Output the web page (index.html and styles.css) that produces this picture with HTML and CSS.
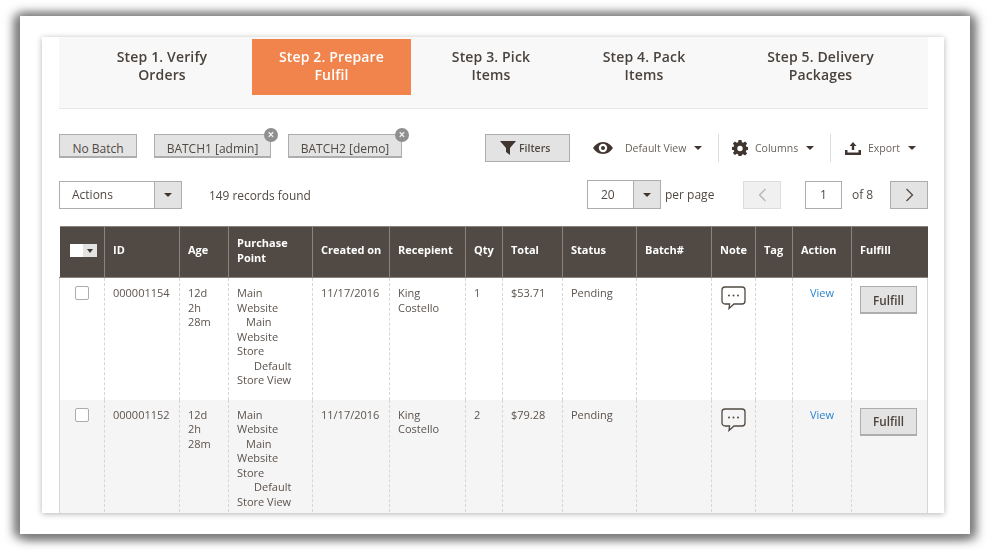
FILE: index.html
```html
<!DOCTYPE html>
<html lang="en">
<head>
    <meta charset="UTF-8">
    <title>Prepare Fulfil</title>
    <link rel="stylesheet" href="styles.css">
</head>
<body>
    <div class="frame">
        <div class="card">
            <div class="steps">
                <div class="step step-1">Step 1. Verify<br>Orders</div>
                <div class="step step-2 active">Step 2. Prepare<br>Fulfil</div>
                <div class="step step-3">Step 3. Pick<br>Items</div>
                <div class="step step-4">Step 4. Pack<br>Items</div>
                <div class="step step-5">Step 5. Delivery<br>Packages</div>
            </div>

            <div class="toolbar">
                <button class="batch batch-none">No Batch</button>
                <button class="batch batch-1">BATCH1 [admin]<span class="batch-close">×</span></button>
                <button class="batch batch-2">BATCH2 [demo]<span class="batch-close">×</span></button>
                <button class="filters">
                    <svg width="16" height="14" viewBox="0 0 16 14"><path d="M0 0h16L10 7v7L6 11V7z" fill="#41362f"/></svg>
                    Filters
                </button>
                <div class="tool tool-view">
                    <svg class="eye" width="20" height="14" viewBox="0 0 20 14"><path fill-rule="evenodd" d="M10 1c4.500 0 8 3 10 6-2 3-5.500 6-10 6S2 10 0 7c2-3 5.500-6 10-6zm0 1.800a4.200 4.200 0 1 0 0 8.400 4.200 4.200 0 0 0 0-8.400zM10 5a2 2 0 1 1 0 4 2 2 0 0 1 0-4z" fill="#41362f"/></svg>
                    <span>Default View</span><i class="caret"></i>
                </div>
                <div class="tool tool-columns">
                    <svg width="16" height="16" viewBox="0 0 16 16"><path fill-rule="evenodd" d="M6.500 0h3l.4 2.300 1.300.5L13.100 1.500l2 2-1.300 1.900.5 1.300L16 7v3l-1.700.3-.5 1.300 1.300 1.900-2 2-1.900-1.300-1.300.5L9.500 16h-3l-.4-1.700-1.300-.5-1.900 1.300-2-2 1.300-1.900-.5-1.300L0 10V7l1.700-.3.500-1.300L.9 3.500l2-2 1.900 1.300 1.300-.5zM8 5.800a2.700 2.700 0 1 0 0 5.400 2.700 2.700 0 0 0 0-5.400z" fill="#41362f"/></svg>
                    <span>Columns</span><i class="caret"></i>
                </div>
                <div class="tool tool-export">
                    <svg width="16" height="14" viewBox="0 0 16 14"><path d="M8 1l3.500 4H9.200v4H6.800V5H4.500zM0 9h2.500v2.500h11V9H16v5H0z" fill="#41362f"/></svg>
                    <span>Export</span><i class="caret"></i>
                </div>
            </div>

            <div class="pager-row">
                <div class="select select-actions"><span class="select-value">Actions</span><span class="select-arrow"><i class="caret"></i></span></div>
                <span class="records">149 records found</span>
                <div class="select select-size"><span class="select-value">20</span><span class="select-arrow"><i class="caret"></i></span></div>
                <span class="per-page">per page</span>
                <button class="page-btn page-prev"><svg width="9" height="14" viewBox="0 0 9 14"><path d="M7.500 1L1.500 7l6 6" fill="none" stroke="#b5b5b5" stroke-width="1.300"/></svg></button>
                <div class="page-input">1</div>
                <span class="page-of">of 8</span>
                <button class="page-btn page-next"><svg width="9" height="14" viewBox="0 0 9 14"><path d="M1.500 1l6 6-6 6" fill="none" stroke="#514943" stroke-width="1.300"/></svg></button>
            </div>

            <table class="grid">
                <colgroup>
                    <col class="c-check"><col class="c-id"><col class="c-age"><col class="c-point"><col class="c-created">
                    <col class="c-recipient"><col class="c-qty"><col class="c-total"><col class="c-status"><col class="c-batch">
                    <col class="c-note"><col class="c-tag"><col class="c-action"><col class="c-fulfill">
                </colgroup>
                <thead>
                    <tr>
                        <th><span class="mass-check"><span class="mass-box"></span><span class="mass-arrow"><i class="caret"></i></span></span></th>
                        <th>ID</th>
                        <th>Age</th>
                        <th>Purchase Point</th>
                        <th>Created on</th>
                        <th>Recepient</th>
                        <th>Qty</th>
                        <th>Total</th>
                        <th>Status</th>
                        <th>Batch#</th>
                        <th>Note</th>
                        <th>Tag</th>
                        <th>Action</th>
                        <th>Fulfill</th>
                    </tr>
                </thead>
                <tbody>
                    <tr>
                        <td class="cell-check"><span class="checkbox"></span></td>
                        <td>000001154</td>
                        <td>12d<br>2h<br>28m</td>
                        <td>Main<br>Website<br><span class="in-1">Main</span><br>Website<br>Store<br><span class="in-2">Default</span><br>Store View</td>
                        <td>11/17/2016</td>
                        <td>King Costello</td>
                        <td class="qty-link">1</td>
                        <td>$53.71</td>
                        <td>Pending</td>
                        <td></td>
                        <td class="cell-note">
                            <svg width="25" height="24" viewBox="0 0 25 24"><path d="M4 1h17a3 3 0 0 1 3 3v11a3 3 0 0 1-3 3h-8l-5 4.500.6-4.500H4a3 3 0 0 1-3-3V4a3 3 0 0 1 3-3z" fill="#fff" stroke="#514943" stroke-width="1.300"/><circle cx="8" cy="9.500" r="1" fill="#514943"/><circle cx="12.500" cy="9.500" r="1" fill="#514943"/><circle cx="17" cy="9.500" r="1" fill="#514943"/></svg>
                        </td>
                        <td></td>
                        <td class="cell-view"><a href="#">View</a></td>
                        <td class="cell-fulfill"><button class="fulfill">Fulfill</button></td>
                    </tr>
                    <tr class="even">
                        <td class="cell-check"><span class="checkbox"></span></td>
                        <td>000001152</td>
                        <td>12d<br>2h<br>28m</td>
                        <td>Main<br>Website<br><span class="in-1">Main</span><br>Website<br>Store<br><span class="in-2">Default</span><br>Store View</td>
                        <td>11/17/2016</td>
                        <td>King Costello</td>
                        <td>2</td>
                        <td>$79.28</td>
                        <td>Pending</td>
                        <td></td>
                        <td class="cell-note">
                            <svg width="25" height="24" viewBox="0 0 25 24"><path d="M4 1h17a3 3 0 0 1 3 3v11a3 3 0 0 1-3 3h-8l-5 4.500.6-4.500H4a3 3 0 0 1-3-3V4a3 3 0 0 1 3-3z" fill="#f5f5f5" stroke="#514943" stroke-width="1.300"/><circle cx="8" cy="9.500" r="1" fill="#514943"/><circle cx="12.500" cy="9.500" r="1" fill="#514943"/><circle cx="17" cy="9.500" r="1" fill="#514943"/></svg>
                        </td>
                        <td></td>
                        <td class="cell-view"><a href="#">View</a></td>
                        <td class="cell-fulfill"><button class="fulfill">Fulfill</button></td>
                    </tr>
                </tbody>
            </table>
        </div>
    </div>
</body>
</html>
```

FILE: styles.css
```css
* {
    box-sizing: border-box;
}

html, body {
    margin: 0;
    padding: 0;
    height: 550px;
    overflow: hidden;
    background: #fff;
}

body {
    font-family: "Open Sans", sans-serif;
    font-size: 11px;
    color: #514943;
    padding: 16px 0 0 20px;
}

button {
    font-family: inherit;
    color: inherit;
}

.frame {
    width: 950px;
    height: 518px;
    background: #fff;
    padding: 21px 26px 21px 22px;
    box-shadow: -4px 1px 10px 2px #7d7d7d, 4px 3px 10px 2px #7d7d7d, 0 -2px 10px 1px #a8a8a8;
    filter: blur(0.4px);
}

.card {
    height: 476px;
    padding: 0 16px 0 17px;
    background: #fff;
    overflow: hidden;
    box-shadow: 0 1px 6px rgba(0, 0, 0, 0.3);
}

/* steps */
.steps {
    display: grid;
    grid-template-columns: 180px 159px 160px 146px 207px;
    height: 72px;
    padding: 2px 4px 0 13px;
    background: #f8f8f8;
    border-bottom: 1px solid #e6e6e6;
}

.step {
    height: 56px;
    padding-top: 9px;
    font-size: 14px;
    line-height: 18px;
    font-weight: 600;
    letter-spacing: 0.15px;
    text-align: center;
    color: #4a423c;
}

.step.active {
    background: #f1844c;
    color: #fff;
}

/* batch buttons and view tools */
.toolbar {
    display: flex;
    align-items: flex-start;
    margin-top: 25px;
    height: 46px;
}

.batch {
    position: relative;
    height: 24px;
    padding: 5px 0 0;
    font-size: 12px;
    background: #e3e3e3;
    border: 1px solid #adadad;
    border-bottom-width: 2px;
}

.batch-none {
    width: 78px;
}

.batch-1 {
    width: 117px;
    margin-left: 17px;
}

.batch-2 {
    width: 114px;
    margin-left: 17px;
}

.batch-close {
    position: absolute;
    top: -7px;
    right: -8px;
    width: 14px;
    height: 14px;
    border-radius: 50%;
    background: #8f8f8f;
    color: #eee;
    font-size: 12px;
    line-height: 13px;
    font-weight: 700;
    text-align: center;
}

.filters {
    display: flex;
    align-items: center;
    gap: 3px;
    width: 85px;
    height: 28px;
    margin-left: 83px;
    padding: 0 0 1px 14px;
    font-size: 10.500px;
    font-weight: 600;
    background: #e3e3e3;
    border: 1px solid #adadad;
}

.tool {
    display: flex;
    align-items: center;
    height: 28px;
    font-size: 10.500px;
    color: #6b625c;
}

.tool-view {
    width: 125px;
    margin-left: 23px;
    padding-right: 0;
}

.tool-view span {
    margin-left: 12px;
}

.tool-columns {
    width: 112px;
    padding-left: 13px;
    border-left: 1px solid #dcdcdc;
}

.tool-columns span {
    margin-left: 7px;
}

.tool-export {
    padding-left: 14px;
    border-left: 1px solid #dcdcdc;
}

.tool-export span {
    margin-left: 7px;
}

.tool .caret {
    margin-left: 8px;
}

.caret {
    display: inline-block;
    width: 0;
    height: 0;
    border-left: 4px solid transparent;
    border-right: 4px solid transparent;
    border-top: 4.500px solid #41362f;
}

/* actions and paging */
.pager-row {
    display: flex;
    align-items: center;
    height: 29px;
    font-size: 12px;
}

.select {
    display: flex;
    height: 28px;
    background: #fff;
    border: 1px solid #adadad;
}

.select-value {
    flex: 1;
    padding-left: 12px;
    line-height: 26px;
}

.select-arrow {
    display: flex;
    align-items: center;
    justify-content: center;
    width: 27px;
    background: #e3e3e3;
    border-left: 1px solid #adadad;
}

.select-actions {
    width: 123px;
}

.records {
    margin-left: 27px;
    width: 378px;
    font-size: 11.900px;
}

.select-size {
    width: 74px;
    height: 29px;
}

.select-size .select-value {
    padding-left: 13px;
    line-height: 27px;
}

.per-page {
    margin-left: 4px;
    width: 78px;
}

.page-btn {
    display: flex;
    align-items: center;
    justify-content: center;
    width: 38px;
    height: 28px;
    padding: 0;
    background: #e3e3e3;
    border: 1px solid #adadad;
}

.page-prev {
    background: #f0f0f0;
    border-color: #dcdcdc;
}

.page-input {
    width: 37px;
    height: 28px;
    margin-left: 24px;
    line-height: 26px;
    text-align: center;
    background: #fff;
    border: 1px solid #adadad;
}

.page-of {
    margin-left: 10px;
    width: 38px;
}

/* grid */
.grid {
    width: 868px;
    margin-top: 17px;
    table-layout: fixed;
    border-collapse: collapse;
    font-size: 11px;
    line-height: 14.500px;
}

.c-check { width: 45px; }
.c-id { width: 75px; }
.c-age { width: 49px; }
.c-point { width: 84px; }
.c-created { width: 77px; }
.c-recipient { width: 76px; }
.c-qty { width: 37px; }
.c-total { width: 60px; }
.c-status { width: 74px; }
.c-batch { width: 75px; }
.c-note { width: 44px; }
.c-tag { width: 37px; }
.c-action { width: 59px; }
.c-fulfill { width: 76px; }

.grid th {
    height: 51px;
    padding: 0 2px 3px 8px;
    background: #514943;
    border-left: 1px solid #8a827c;
    border-top: 1px solid #8a827c;
    border-bottom: 1px solid #8a827c;
    color: #fff;
    font-weight: 700;
    text-align: left;
}

.grid th:nth-child(4) {
    padding-right: 10px;
}

.grid th:first-child {
    border-left: 0;
}

.grid td {
    height: 122px;
    padding: 8px 8px 0;
    vertical-align: top;
    border-left: 1px dashed #d6d6d6;
    color: #5c534d;
}

.grid td:first-child {
    border-left: 1px solid #d6d6d6;
}

.grid td:last-child {
    border-right: 1px solid #d6d6d6;
}

.grid .even td {
    background: #f5f5f5;
}

.in-1 {
    margin-left: 9px;
}

.in-2 {
    margin-left: 17px;
}

.qty-link {
    color: #1979c3;
}

.mass-check {
    display: flex;
    height: 13px;
    margin-left: 2px;
    width: 27px;
}

.mass-box {
    width: 13px;
    background: #fff;
}

.mass-arrow {
    display: flex;
    align-items: center;
    justify-content: center;
    width: 14px;
    background: #e3e3e3;
}

.mass-arrow .caret {
    border-left-width: 3.500px;
    border-right-width: 3.500px;
    border-top-width: 4px;
}

.checkbox {
    display: block;
    width: 14px;
    height: 14px;
    margin: 0 0 0 7px;
    background: #fff;
    border: 1px solid #adadad;
    border-radius: 2px;
}

.cell-note svg {
    display: block;
    margin-left: 1px;
}

.cell-view a {
    color: #2b85d0;
    text-decoration: none;
    margin-left: 9px;
}

.grid .cell-fulfill {
    padding: 8px 0 0 8px;
}

.fulfill {
    width: 57px;
    height: 28px;
    padding: 0;
    font-size: 11.700px;
    font-weight: 600;
    color: #4a423c;
    background: #e3e3e3;
    border: 1px solid #adadad;
    border-bottom-width: 2px;
}
```
